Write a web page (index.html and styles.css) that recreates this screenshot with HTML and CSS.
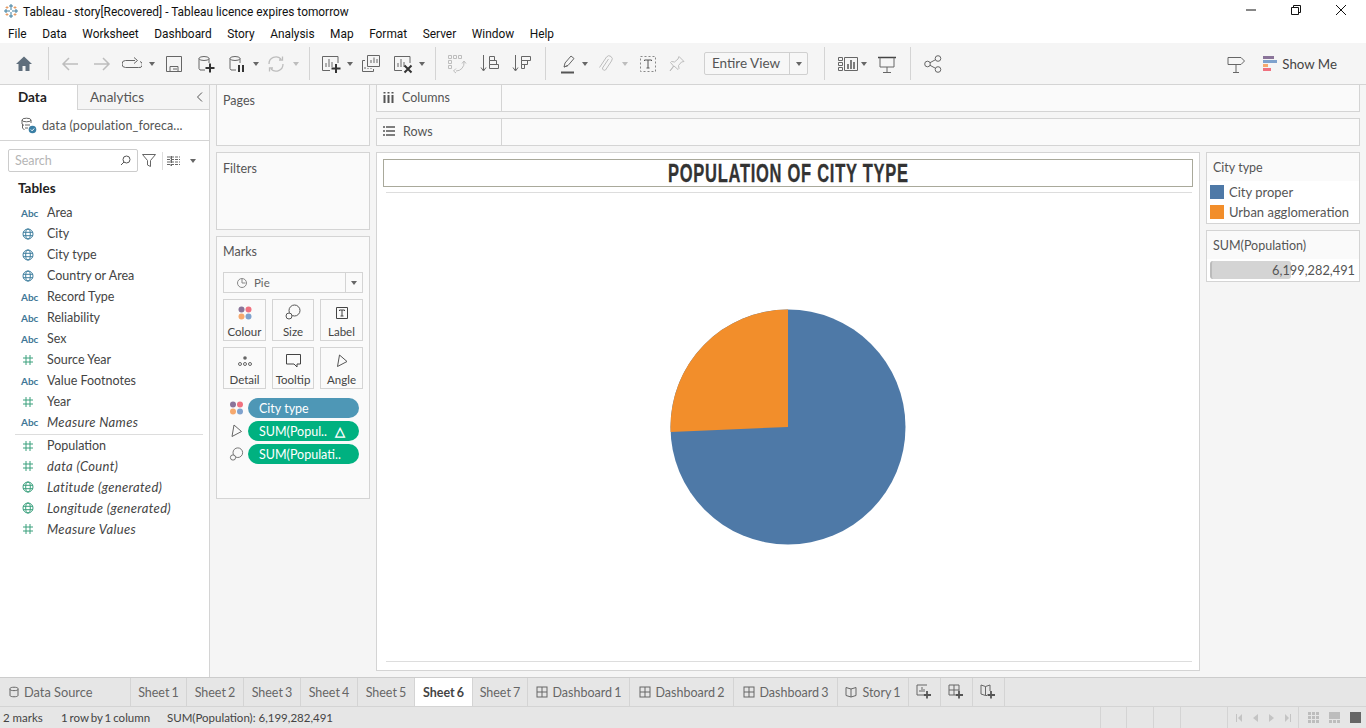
FILE: index.html
```html
<!DOCTYPE html>
<html lang="en">
<head>
    <meta charset="UTF-8">
    <meta name="viewport" content="width=device-width, initial-scale=1.0">
    <title>Tableau - story[Recovered]</title>
    <link rel="stylesheet" href="styles.css">
</head>
<body>
    <svg class="defs" width="0" height="0">
        <symbol id="globe" viewBox="0 0 12 12"><g fill="none" stroke="currentColor"><circle cx="6" cy="6" r="5"/><ellipse cx="6" cy="6" rx="2.3" ry="5"/><path d="M1 4.300h10M1 7.700h10"/></g></symbol>
        <symbol id="hash" viewBox="0 0 12 12"><path d="M4 1v10M8 1v10M1 4h10M1 8h10" stroke="currentColor" fill="none"/></symbol>
        <symbol id="drop" viewBox="0 0 6 4"><path d="M0 0h6L3 4z" fill="currentColor"/></symbol>
        <symbol id="dots" viewBox="0 0 14 14"><circle cx="3.500" cy="3.500" r="3" fill="#8a7499"/><circle cx="10.500" cy="3.500" r="3" fill="#f0717f"/><circle cx="3.500" cy="10.500" r="3" fill="#f6a96e"/><circle cx="10.500" cy="10.500" r="3" fill="#7fa2cd"/></symbol>
        <symbol id="size" viewBox="0 0 16 16"><g fill="none" stroke="currentColor"><circle cx="9.500" cy="6.500" r="5.500"/><circle cx="4" cy="12" r="3" fill="#fafafa"/></g></symbol>
        <symbol id="angle" viewBox="0 0 12 14"><path d="M3.500 1L11 7.500 1.500 12.500z" fill="none" stroke="currentColor"/></symbol>
        <symbol id="dash" viewBox="0 0 12 12"><g fill="none" stroke="currentColor"><rect x="1" y="1" width="10" height="10"/><path d="M6 1v10M1 6h10"/></g></symbol>
        <symbol id="book" viewBox="0 0 12 12"><path d="M1 1.500L6 3l5-1.500v8L6 11 1 9.500zM6 3v8" fill="none" stroke="currentColor"/></symbol>
    </svg>

    <div class="app">
        <div class="titlebar">
            <svg class="logo" width="14" height="14" viewBox="0 0 14 14">
                <path d="M7 0v6M5 2h4M7 8v6M5 12h4M0 7h6M2 5v4M8 7h6M12 5v4" stroke="#3f7f9f" fill="none"/>
                <path d="M3 2v3M1.500 3.500h3M11 2v3M9.500 3.500h3M3 9v3M1.500 10.500h3M11 9v3M9.500 10.500h3" stroke="#e0833f" fill="none" opacity=".7"/>
            </svg>
            <span class="titlebar-text">Tableau - story[Recovered] - Tableau licence expires tomorrow</span>
            <div class="win-controls">
                <svg width="10" height="10" viewBox="0 0 10 10"><path d="M0 5h10" stroke="#111" fill="none"/></svg>
                <svg width="10" height="10" viewBox="0 0 10 10"><path d="M.500 2.500h7v7h-7zM2.500 2.500v-2h7v7h-2" stroke="#111" fill="none"/></svg>
                <svg width="10" height="10" viewBox="0 0 10 10"><path d="M0 0l10 10M10 0L0 10" stroke="#111" fill="none"/></svg>
            </div>
        </div>

        <div class="menubar">
            <span>File</span><span>Data</span><span>Worksheet</span><span>Dashboard</span><span>Story</span><span>Analysis</span><span>Map</span><span>Format</span><span>Server</span><span>Window</span><span>Help</span>
        </div>

        <div class="toolbar">
            <svg class="tb ml-14" width="20" height="20" viewBox="0 0 20 20"><path d="M10 2.500L2 10h2.500v7h4v-5h3v5h4v-7H18z" fill="#5f6e7c"/></svg>
            <i class="tb-sep ml-14"></i>
            <svg class="tb ml-11 off" width="20" height="20" viewBox="0 0 20 20"><path d="M18 10H3M9 4l-6 6 6 6" fill="none" stroke="currentColor" stroke-width="1.500"/></svg>
            <svg class="tb ml-12 off" width="20" height="20" viewBox="0 0 20 20"><path d="M2 10h15M11 4l6 6-6 6" fill="none" stroke="currentColor" stroke-width="1.500"/></svg>
            <svg class="tb ml-10" width="20" height="20" viewBox="0 0 20 20"><path d="M13 6.500H3.500a3 3 0 0 0 0 7h13a3 3 0 0 0 1.500-6M12 3.500l3.500 3-3.500 3" fill="none" stroke="currentColor"/></svg>
            <svg class="tb-drop ml-7"><use href="#drop"/></svg>
            <svg class="tb ml-10" width="18" height="18" viewBox="0 0 18 18"><path d="M1.500 1.500h15v15h-15zM5 16.500v-5h8v5M8 14h4" fill="none" stroke="currentColor"/></svg>
            <svg class="tb ml-14" width="18" height="18" viewBox="0 0 18 18"><g fill="none" stroke="currentColor"><ellipse cx="7" cy="3.500" rx="5" ry="2"/><path d="M2 3.500v10l1 1.500h5M12 3.500V8"/></g><path d="M13 8.500v9M8.500 13h9" stroke="#333" stroke-width="2" fill="none"/></svg>
            <svg class="tb ml-13" width="18" height="18" viewBox="0 0 18 18"><g fill="none" stroke="currentColor"><ellipse cx="7" cy="3.500" rx="5" ry="2"/><path d="M2 3.500v10l1 1.500h5M12 3.500V8"/></g><path d="M11 10v7M15 10v7" stroke="#333" stroke-width="2" fill="none"/></svg>
            <svg class="tb-drop ml-7"><use href="#drop"/></svg>
            <svg class="tb ml-7 off" width="20" height="20" viewBox="0 0 20 20"><path d="M3 10a7 7 0 0 1 12-5M17 10a7 7 0 0 1-12 5M13 6h3.500V2.500M7 14H3.500v3.500" fill="none" stroke="currentColor" stroke-width="1.300"/></svg>
            <svg class="tb-drop ml-7 off"><use href="#drop"/></svg>
            <i class="tb-sep ml-10"></i>
            <svg class="tb ml-11" width="20" height="20" viewBox="0 0 20 20"><path d="M17 9V2.500H1.500v14H9M5 13V9M8 13V5M11 13V8" fill="none" stroke="currentColor"/><path d="M15 10v9M10.500 14.500h9" stroke="#333" stroke-width="2" fill="none"/></svg>
            <svg class="tb-drop ml-6"><use href="#drop"/></svg>
            <svg class="tb ml-8" width="20" height="20" viewBox="0 0 20 20"><path d="M6.500 1.500h12v11h-12zM10 9V6M13 9V3.500M16 9V5M4 6.500H1.500v11h11v-2.500M4 15v-2M7 15v-1M10 15v-1" fill="none" stroke="currentColor"/></svg>
            <svg class="tb ml-12" width="20" height="20" viewBox="0 0 20 20"><path d="M17 9V2.500H1.500v14H9M5 13V9M8 13V5M11 13V8" fill="none" stroke="currentColor"/><path d="M11.500 11.500l7 7M18.500 11.500l-7 7" stroke="#333" stroke-width="2" fill="none"/></svg>
            <svg class="tb-drop ml-6"><use href="#drop"/></svg>
            <i class="tb-sep ml-10"></i>
            <svg class="tb ml-11 off" width="20" height="20" viewBox="0 0 20 20"><path d="M1.500 1.500h3v3h-3zM6.500 1.500h3v3h-3zM11.500 1.500h3v3h-3zM1.500 6.500h3v3h-3zM1.500 11.500h3v3h-3zM17 8a8 8 0 0 1-8 9M9 14.500l-2.500 2.500L9 19M15 9.500L17 7l2 2.500" fill="none" stroke="currentColor"/></svg>
            <svg class="tb ml-13" width="20" height="20" viewBox="0 0 20 20"><path d="M3.500 1v15M1 13.500l2.500 3.500L6 13.500M9.500 2.500h5v4h-5zM9.500 6.500h7v4h-7zM9.500 10.500h9v4h-9z" fill="none" stroke="currentColor"/></svg>
            <svg class="tb ml-12" width="20" height="20" viewBox="0 0 20 20"><path d="M3.500 1v15M1 13.500l2.500 3.500L6 13.500M9.500 2.500h9v4h-9zM9.500 6.500h6v4h-6zM9.500 10.500h3v4h-3z" fill="none" stroke="currentColor"/></svg>
            <i class="tb-sep ml-13"></i>
            <svg class="tb ml-14" width="16" height="20" viewBox="0 0 16 20"><path d="M4 13l1-4 6-7 3 2.500-6 7zM4 13l4-1.500" fill="none" stroke="currentColor"/><path d="M1 18.500h13" stroke="#555" stroke-width="2" fill="none"/></svg>
            <svg class="tb-drop ml-6"><use href="#drop"/></svg>
            <svg class="tb ml-9 off" width="16" height="20" viewBox="0 0 16 20"><path d="M11.500 5l-6 9a2 2 0 0 0 3 2l6-9a3.200 3.200 0 0 0-5-4l-7 10.500" fill="none" stroke="currentColor"/></svg>
            <svg class="tb-drop ml-9 off"><use href="#drop"/></svg>
            <svg class="tb ml-11" width="18" height="18" viewBox="0 0 18 18"><path d="M1.500 1.500h15v15h-15z" fill="none" stroke="#888" stroke-dasharray="2 2"/><path d="M5.500 6V5h7v1M9 5v8M7.500 13h3" fill="none" stroke="#555"/></svg>
            <svg class="tb ml-11 off" width="18" height="18" viewBox="0 0 18 18"><path d="M11 1.500l5 5-2.500.5-3 3.500.5 3-1 1L6 11l-4 5 3.500-5-3-3.500 1-1 3 .5 3.500-3z" fill="none" stroke="currentColor"/></svg>
            <div class="fit-combo ml-18">
                <span class="fit-label">Entire View</span>
                <span class="fit-arrow"><svg class="tb-drop"><use href="#drop"/></svg></span>
            </div>
            <i class="tb-sep ml-16"></i>
            <svg class="tb ml-12" width="22" height="20" viewBox="0 0 22 20"><path d="M1.500 3.500h4v3h-4zM1.500 8.500h4v3h-4zM1.500 13.500h4v3h-4zM7.500 3.500h13v13h-13z" fill="none" stroke="currentColor"/><path d="M11 15v-5M14 15V6M17 15v-7" stroke="#555" stroke-width="1.500" fill="none"/></svg>
            <svg class="tb-drop ml-2"><use href="#drop"/></svg>
            <svg class="tb ml-11" width="18" height="20" viewBox="0 0 18 20"><path d="M0 3.500h18" stroke="#444" stroke-width="1.500" fill="none"/><path d="M2 3.500v9.500h14V3.500M9 13v5M5 18.500h8" fill="none" stroke="currentColor"/></svg>
            <i class="tb-sep ml-14"></i>
            <svg class="tb ml-13" width="18" height="18" viewBox="0 0 18 18"><g fill="none" stroke="currentColor"><circle cx="3.500" cy="9" r="2.800"/><circle cx="14" cy="3.500" r="2.800"/><circle cx="14" cy="14.500" r="2.800"/><path d="M6 7.700l5.500-3M6 10.300l5.500 3"/></g></svg>
            <div class="toolbar-right">
                <svg class="tb" width="18" height="20" viewBox="0 0 18 20"><path d="M1 3.500h13l3.500 3.500-3.500 3.500H1zM9 10.500v8M6 18.500h6" fill="none" stroke="currentColor"/></svg>
                <div class="show-me">
                    <svg width="15" height="16" viewBox="0 0 15 16"><path d="M0 0h11v3H0z" fill="#8a7499"/><path d="M0 4h14v3H0z" fill="#7fa2cd"/><path d="M0 8h5v3H0z" fill="#f6a96e"/><path d="M0 12h8v3H0z" fill="#f0717f"/></svg>
                    <span>Show Me</span>
                </div>
            </div>
        </div>

        <div class="main">
            <div class="data-pane">
                <div class="pane-tabs">
                    <div class="pane-tab active">Data</div>
                    <div class="pane-tab analytics">Analytics
                        <svg class="collapse" width="7" height="10" viewBox="0 0 7 10"><path d="M6 .500L1.500 5 6 9.500" fill="none" stroke="#555"/></svg>
                    </div>
                </div>
                <div class="source-row">
                    <svg width="17" height="17" viewBox="0 0 17 17"><g fill="none" stroke="#666"><ellipse cx="6.500" cy="3" rx="4.500" ry="1.800"/><path d="M2 3v4l2 1.500M11 3v3M2.500 7v4l2 2M5 8h5M5 11h3"/></g><circle cx="12.500" cy="12.500" r="3.800" fill="#3a7fa5"/><path d="M10.800 12.500l1.300 1.300 2.100-2.300" stroke="#fff" fill="none"/></svg>
                    <span>data (population_foreca...</span>
                </div>
                <div class="search-row">
                    <div class="search-box">
                        <span>Search</span>
                        <svg width="11" height="11" viewBox="0 0 11 11"><circle cx="6.500" cy="4.500" r="3.500" fill="none" stroke="#555"/><path d="M4 7l-3 3" stroke="#555" fill="none"/></svg>
                    </div>
                    <svg class="filter-icon" width="14" height="13" viewBox="0 0 14 13"><path d="M.500.500h13L8.500 6.500v6l-3-1.500V6.500z" fill="none" stroke="#666"/></svg>
                    <i class="search-sep"></i>
                    <svg class="list-icon" width="13" height="10" viewBox="0 0 13 10"><path d="M0 1h13M0 3.500h13M0 6h13M0 8.500h13M4 0v10M4.500 0v10" stroke="#666" stroke-dasharray="3 1" fill="none"/></svg>
                    <svg class="tb-drop list-drop"><use href="#drop"/></svg>
                </div>
                <div class="tables-title">Tables</div>
                <ul class="field-list">
                    <li><span class="abc">Abc</span>Area</li>
                    <li><svg class="f-icon dim"><use href="#globe"/></svg>City</li>
                    <li><svg class="f-icon dim"><use href="#globe"/></svg>City type</li>
                    <li><svg class="f-icon dim"><use href="#globe"/></svg>Country or Area</li>
                    <li><span class="abc">Abc</span>Record Type</li>
                    <li><span class="abc">Abc</span>Reliability</li>
                    <li><span class="abc">Abc</span>Sex</li>
                    <li><svg class="f-icon mea"><use href="#hash"/></svg>Source Year</li>
                    <li><span class="abc">Abc</span>Value Footnotes</li>
                    <li><svg class="f-icon mea"><use href="#hash"/></svg>Year</li>
                    <li class="gen"><span class="abc">Abc</span>Measure Names</li>
                    <li class="field-divider"></li>
                    <li><svg class="f-icon mea"><use href="#hash"/></svg>Population</li>
                    <li class="gen"><svg class="f-icon mea"><use href="#hash"/></svg>data (Count)</li>
                    <li class="gen"><svg class="f-icon mea"><use href="#globe"/></svg>Latitude (generated)</li>
                    <li class="gen"><svg class="f-icon mea"><use href="#globe"/></svg>Longitude (generated)</li>
                    <li class="gen"><svg class="f-icon mea"><use href="#hash"/></svg>Measure Values</li>
                </ul>
            </div>

            <div class="cards-col">
                <div class="card pages"><div class="card-title">Pages</div></div>
                <div class="card filters"><div class="card-title">Filters</div></div>
                <div class="card marks">
                    <div class="card-title">Marks</div>
                    <div class="mark-type">
                        <svg width="10" height="10" viewBox="0 0 10 10"><circle cx="5" cy="5" r="4.500" fill="none" stroke="#888"/><path d="M5 1v4h3.500" fill="none" stroke="#888"/></svg>
                        <span>Pie</span>
                        <b class="mark-arrow"><svg class="tb-drop"><use href="#drop"/></svg></b>
                    </div>
                    <div class="mark-grid">
                        <div class="mark-btn"><svg width="14" height="14"><use href="#dots"/></svg><span>Colour</span></div>
                        <div class="mark-btn"><svg width="16" height="16"><use href="#size"/></svg><span>Size</span></div>
                        <div class="mark-btn"><svg width="14" height="14" viewBox="0 0 14 14"><path d="M1.500 1.500h11v11h-11z" fill="none" stroke="#444"/><path d="M4.500 5V4h5v1M7 4v6M5.500 10h3" fill="none" stroke="#444"/></svg><span>Label</span></div>
                        <div class="mark-btn"><svg width="14" height="14" viewBox="0 0 14 14"><circle cx="7" cy="4" r="1.800" fill="#666"/><g fill="none" stroke="#666"><circle cx="2" cy="10" r="1.500"/><circle cx="7" cy="10" r="1.500"/><circle cx="12" cy="10" r="1.500"/></g></svg><span>Detail</span></div>
                        <div class="mark-btn"><svg width="15" height="14" viewBox="0 0 15 14"><path d="M.500.500h14v9.500H11v3L8 10H.500z" fill="none" stroke="#444"/></svg><span>Tooltip</span></div>
                        <div class="mark-btn"><svg width="12" height="14"><use href="#angle"/></svg><span>Angle</span></div>
                    </div>
                    <div class="pill-row"><svg width="14" height="14"><use href="#dots"/></svg><div class="pill blue">City type</div></div>
                    <div class="pill-row"><svg class="pill-icon" width="12" height="14"><use href="#angle"/></svg><div class="pill green">SUM(Popul..<span class="delta">&#9651;</span></div></div>
                    <div class="pill-row"><svg class="pill-icon" width="15" height="15"><use href="#size"/></svg><div class="pill green">SUM(Populati..</div></div>
                </div>
            </div>

            <div class="work-col">
                <div class="shelf">
                    <div class="shelf-label">
                        <svg width="11" height="11" viewBox="0 0 11 11"><path d="M1.500 3v8M5.500 3v8M9.500 3v8M1.500 0v1.500M5.500 0v1.500M9.500 0v1.500" stroke="#555" stroke-width="2" fill="none"/></svg>
                        Columns
                    </div>
                </div>
                <div class="shelf">
                    <div class="shelf-label">
                        <svg width="12" height="10" viewBox="0 0 12 10"><path d="M3 1h9M3 5h9M3 9h9M0 1h2M0 5h2M0 9h2" stroke="#555" stroke-width="1.500" fill="none"/></svg>
                        Rows
                    </div>
                </div>
                <div class="work-row">
                    <div class="sheet">
                        <div class="sheet-title"><span>POPULATION OF CITY TYPE</span></div>
                        <div class="view">
                            <svg class="pie" width="236" height="236" viewBox="0 0 236 236">
                                <circle cx="118" cy="118" r="117.500" fill="#4e79a7"/>
                                <path d="M118 118V.500A117.500 117.500 0 0 0 .600 123z" fill="#f28e2b"/>
                            </svg>
                        </div>
                    </div>
                    <div class="legends">
                        <div class="legend">
                            <div class="legend-title">City type</div>
                            <div class="legend-body">
                                <div class="legend-item"><i class="swatch s-blue"></i>City proper</div>
                                <div class="legend-item"><i class="swatch s-orange"></i>Urban agglomeration</div>
                            </div>
                        </div>
                        <div class="legend">
                            <div class="legend-title">SUM(Population)</div>
                            <div class="legend-body size-body">
                                <div class="size-bar"></div>
                                <span>6,199,282,491</span>
                            </div>
                        </div>
                    </div>
                </div>
            </div>
        </div>

        <div class="tabs">
            <div class="tab tab-source"><svg width="10" height="12" viewBox="0 0 10 12"><path d="M1 2.500C1 .8 9 .8 9 2.500v7c0 1.700-8 1.700-8 0zM1 3.500c0 1.500 8 1.500 8 0" fill="none" stroke="#666"/></svg>Data Source</div>
            <div class="tab w-s1">Sheet 1</div>
            <div class="tab w-s2">Sheet 2</div>
            <div class="tab w-s2">Sheet 3</div>
            <div class="tab w-s2">Sheet 4</div>
            <div class="tab w-s2">Sheet 5</div>
            <div class="tab w-s6 active">Sheet 6</div>
            <div class="tab w-s7">Sheet 7</div>
            <div class="tab w-d1"><svg class="tab-icon"><use href="#dash"/></svg>Dashboard 1</div>
            <div class="tab w-d2"><svg class="tab-icon"><use href="#dash"/></svg>Dashboard 2</div>
            <div class="tab w-d2"><svg class="tab-icon"><use href="#dash"/></svg>Dashboard 3</div>
            <div class="tab w-st"><svg class="tab-icon"><use href="#book"/></svg>Story 1</div>
            <div class="tab w-new">
                <svg width="17" height="16" viewBox="0 0 17 16"><path d="M11 1H1v10h6M4 8V6M6 8V3M8 8V5" stroke="#666" fill="none"/><path d="M11 7v7.500M7.500 11h7.500" stroke="#555" stroke-width="1.800" fill="none"/></svg>
            </div>
            <div class="tab w-new">
                <svg width="17" height="16" viewBox="0 0 17 16"><path d="M11 7V1H1v10h6M6 1v10M1 6h10" stroke="#666" fill="none"/><path d="M11 7v7.500M7.500 11h7.500" stroke="#555" stroke-width="1.800" fill="none"/></svg>
            </div>
            <div class="tab w-new">
                <svg width="17" height="16" viewBox="0 0 17 16"><path d="M1 1l4.500 1.500L10 1v6M1 1v9l4.500 1.500H7M5.500 2.500v9" stroke="#666" fill="none"/><path d="M11 7v7.500M7.500 11h7.500" stroke="#555" stroke-width="1.800" fill="none"/></svg>
            </div>
        </div>

        <div class="statusbar">
            <span class="st-marks">2 marks</span>
            <span class="st-rows">1 row by 1 column</span>
            <span>SUM(Population): 6,199,282,491</span>
            <div class="st-right">
                <i class="st-cell c1"></i><i class="st-cell c2"></i><i class="st-cell c2"></i><i class="st-cell c3"></i>
                <div class="st-cell st-nav">
                    <svg width="6" height="8" viewBox="0 0 6 8"><path d="M0 0h1v8H0zM6 0v8L2 4z" fill="#c4c4c4"/></svg>
                    <svg width="5" height="8" viewBox="0 0 5 8"><path d="M5 0v8L0 4z" fill="#c4c4c4"/></svg>
                    <svg width="5" height="8" viewBox="0 0 5 8"><path d="M0 0v8l5-4z" fill="#c4c4c4"/></svg>
                    <svg width="6" height="8" viewBox="0 0 6 8"><path d="M0 0v8l4-4zM5 0h1v8H5z" fill="#c4c4c4"/></svg>
                </div>
                <div class="st-views">
                    <svg width="11" height="11" viewBox="0 0 11 11"><path d="M0 0h3v3H0zM4 0h3v3H4zM8 0h3v3H8zM0 4h3v3H0zM4 4h3v3H4zM8 4h3v3H8zM0 8h3v3H0zM4 8h3v3H4zM8 8h3v3H8z" fill="#bdbdbd"/></svg>
                    <svg width="11" height="11" viewBox="0 0 11 11"><path d="M0 0h11v7H0zM0 8h3v3H0zM4 8h3v3H4zM8 8h3v3H8z" fill="#bdbdbd"/></svg>
                    <svg width="11" height="11" viewBox="0 0 11 11"><path d="M0 0h11v11H0z" fill="#666"/></svg>
                </div>
            </div>
        </div>
    </div>
</body>
</html>
```

FILE: styles.css
```css
* {
    box-sizing: border-box;
}
html, body {
    margin: 0;
    padding: 0;
    height: 100%;
    overflow: hidden;
}
body {
    font-family: Lato, "Open Sans", sans-serif;
    font-size: 12.500px;
    color: #444;
    background: #f5f5f5;
}
.defs {
    position: absolute;
}
svg {
    display: block;
    flex: none;
}
.app {
    display: flex;
    flex-direction: column;
    height: 728px;
}

/* window chrome */
.titlebar {
    flex: none;
    display: flex;
    align-items: center;
    height: 22px;
    padding-left: 4px;
    background: #fff;
    font-family: Roboto, sans-serif;
    font-size: 11.900px;
    color: #111;
}
.titlebar-text {
    margin-left: 5px;
    padding-top: 2px;
}
.win-controls {
    display: flex;
    gap: 35px;
    margin-left: auto;
    margin-right: 20px;
    margin-top: -2px;
}
.menubar {
    flex: none;
    display: flex;
    align-items: center;
    height: 21px;
    padding: 2px 0 0 8px;
    background: #fff;
    font-family: Roboto, sans-serif;
    font-size: 11.900px;
    color: #111;
}
.menubar span {
    margin-right: 15.500px;
}

/* toolbar */
.toolbar {
    flex: none;
    display: flex;
    align-items: center;
    height: 42px;
    background: #f5f5f5;
    border-bottom: 1px solid #d4d4d4;
}
.tb {
    color: #666;
}
.off {
    color: #bdbdbd;
}
.tb-sep {
    display: block;
    width: 1px;
    height: 33px;
    background: #d4d4d4;
}
.tb-drop {
    width: 6px;
    height: 4px;
    color: #666;
}
.tb-drop.off {
    color: #bdbdbd;
}
.ml-2 { margin-left: 2px; }
.ml-6 { margin-left: 6px; }
.ml-7 { margin-left: 7px; }
.ml-8 { margin-left: 8px; }
.ml-9 { margin-left: 9px; }
.ml-10 { margin-left: 10px; }
.ml-11 { margin-left: 11px; }
.ml-12 { margin-left: 12px; }
.ml-13 { margin-left: 13px; }
.ml-14 { margin-left: 14px; }
.ml-16 { margin-left: 16px; }
.ml-18 { margin-left: 18px; }
.fit-combo {
    display: flex;
    width: 104px;
    height: 23px;
    border: 1px solid #d0d0d0;
    border-radius: 2px;
    background: #f7f7f7;
}
.fit-label {
    flex: 1;
    line-height: 20px;
    padding-left: 7px;
    font-size: 13.500px;
    color: #555;
}
.fit-arrow {
    display: flex;
    align-items: center;
    justify-content: center;
    width: 18px;
    border-left: 1px solid #d0d0d0;
}
.toolbar-right {
    display: flex;
    align-items: center;
    margin-left: auto;
    margin-right: 29px;
}
.show-me {
    display: flex;
    align-items: center;
    margin-left: 18px;
    font-size: 13.300px;
    color: #444;
}
.show-me span {
    margin-left: 4px;
}

.main {
    flex: 1;
    display: flex;
    min-height: 0;
}

/* data pane */
.data-pane {
    flex: none;
    width: 210px;
    background: #fff;
    border-right: 1px solid #d4d4d4;
}
.pane-tabs {
    display: flex;
    height: 25px;
}
.pane-tab {
    line-height: 25px;
    font-size: 13.500px;
}
.pane-tab.active {
    width: 77px;
    padding-left: 18px;
    font-weight: 700;
    color: #222;
}
.pane-tab.analytics {
    flex: 1;
    display: flex;
    align-items: center;
    padding-left: 12px;
    background: #f5f5f5;
    border-left: 1px solid #d4d4d4;
    border-bottom: 1px solid #d4d4d4;
    color: #555;
}
.collapse {
    margin-left: auto;
    margin-right: 6px;
}
.source-row {
    display: flex;
    align-items: center;
    height: 31px;
    padding-left: 20px;
    border-bottom: 1px solid #d4d4d4;
    color: #555;
}
.source-row span {
    margin-left: 5px;
    letter-spacing: 0.1px;
}
.search-row {
    display: flex;
    align-items: center;
    height: 23px;
    margin-top: 8px;
    padding-left: 8px;
}
.search-box {
    display: flex;
    align-items: center;
    justify-content: space-between;
    width: 130px;
    height: 23px;
    padding: 0 6px;
    border: 1px solid #ccc;
    border-radius: 2px;
    color: #b5b5b5;
}
.filter-icon {
    margin-left: 4px;
}
.search-sep {
    display: block;
    width: 1px;
    height: 18px;
    margin-left: 6px;
    background: #ddd;
}
.list-icon {
    margin-left: 4px;
}
.list-drop {
    margin-left: 10px;
}
.tables-title {
    margin: 7px 0 0 18px;
    height: 18px;
    line-height: 18px;
    font-size: 13.500px;
    font-weight: 700;
    color: #222;
}
.field-list {
    list-style: none;
    margin: 5px 0 0;
    padding: 0;
}
.field-list li {
    display: flex;
    align-items: center;
    height: 21px;
    color: #444;
}
.field-list li.gen {
    padding-bottom: 2px;
    font-size: 13px;
    font-style: italic;
    letter-spacing: 0.35px;
}
.field-list li.field-divider {
    height: 1px;
    margin: 1px 6px 0 15px;
    background: #ddd;
}
.abc {
    width: 47px;
    padding-left: 21px;
    font-size: 10px;
    font-style: normal;
    font-weight: 700;
    letter-spacing: 0;
    color: #3f7797;
}
.f-icon {
    width: 12px;
    height: 12px;
    margin: 0 13px 0 22px;
}
.f-icon.dim {
    color: #3f7f9f;
}
.f-icon.mea {
    color: #3aa07d;
}

/* pages / filters / marks */
.cards-col {
    flex: none;
    width: 166px;
    padding: 0 6px;
    display: flex;
    flex-direction: column;
    gap: 6px;
}
.card {
    flex: none;
    background: #fafafa;
    border: 1px solid #d4d4d4;
}
.card-title {
    padding: 9px 6px 0;
    line-height: 14px;
    color: #555;
}
.pages {
    height: 61px;
    border-top: 0;
}
.filters {
    height: 78px;
}
.marks {
    height: 263px;
    padding: 0 6px;
}
.marks .card-title {
    padding: 8px 0 0;
}
.mark-type {
    display: flex;
    align-items: center;
    height: 21px;
    margin-top: 13px;
    padding-left: 13px;
    border: 1px solid #d4d4d4;
    font-size: 11.500px;
    color: #666;
}
.mark-type span {
    margin-left: 7px;
}
.mark-arrow {
    display: flex;
    align-items: center;
    justify-content: center;
    width: 17px;
    height: 100%;
    margin-left: auto;
    border-left: 1px solid #d4d4d4;
}
.mark-grid {
    display: grid;
    grid-template-columns: 43px 42px 43px;
    grid-auto-rows: 42px;
    column-gap: 6px;
    row-gap: 6px;
    margin-top: 6px;
}
.mark-btn {
    display: flex;
    flex-direction: column;
    align-items: center;
    justify-content: flex-end;
    border: 1px solid #d4d4d4;
    font-size: 11.500px;
    color: #444;
    padding-bottom: 1px;
}
.mark-btn span {
    margin-top: 5px;
    line-height: 14px;
}
.mark-btn svg {
    color: #555;
}
.pill-row {
    display: flex;
    align-items: center;
    height: 20px;
    margin-top: 3px;
}
.mark-grid + .pill-row {
    margin-top: 9px;
}
.pill-row svg {
    width: 15px;
    margin-left: 6px;
    color: #666;
}
.pill-row .pill-icon {
    height: 14px;
}
.pill {
    display: flex;
    align-items: center;
    width: 111px;
    height: 20px;
    margin-left: 4px;
    padding-left: 11px;
    border-radius: 10px;
    font-size: 12.500px;
    color: #fff;
}
.pill.blue {
    background: #4e97b6;
}
.pill.green {
    background: #00b180;
}
.delta {
    margin-left: 8px;
    font-size: 13px;
    font-weight: 700;
}

/* shelves and view */
.work-col {
    flex: 1;
    min-width: 0;
    padding-right: 6px;
    display: flex;
    flex-direction: column;
}
.shelf {
    flex: none;
    height: 28px;
    margin-bottom: 6px;
    background: #fafafa;
    border: 1px solid #d4d4d4;
}
.shelf:first-child {
    height: 27px;
    border-top: 0;
}
.shelf-label {
    display: flex;
    align-items: center;
    gap: 8px;
    width: 125px;
    height: 100%;
    padding: 0 0 2px 6px;
    border-right: 1px solid #d4d4d4;
    font-size: 12.500px;
    color: #555;
}
.work-row {
    flex: none;
    display: flex;
    gap: 6px;
}
.sheet {
    width: 824px;
    height: 519px;
    padding: 6px;
    background: #fff;
    border: 1px solid #d4d4d4;
}
.sheet-title {
    height: 28px;
    border: 1px solid #a9a99b;
    text-align: center;
    font-family: "Liberation Sans", sans-serif;
    font-size: 25px;
    line-height: 26px;
    font-weight: 700;
    color: #333;
}
.sheet-title span {
    display: inline-block;
    transform: scaleX(0.66);
    letter-spacing: 1.1px;
    -webkit-text-stroke: 0.3px #333;
}
.view {
    display: flex;
    align-items: center;
    justify-content: center;
    height: 470px;
    margin: 5px 1px 0 3px;
    padding-right: 2px;
    border-top: 1px solid #ddd;
    border-bottom: 1px solid #ddd;
}
.legends {
    flex: 1;
    display: flex;
    flex-direction: column;
    gap: 6px;
}
.legend {
    background: #fafafa;
    border: 1px solid #d4d4d4;
}
.legend-title {
    height: 28px;
    padding: 8px 6px 0;
    line-height: 14px;
    color: #555;
}
.legend-body {
    background: #fff;
    padding: 1px 0 1px 3px;
}
.legend-item {
    display: flex;
    align-items: center;
    gap: 5px;
    height: 20px;
    font-size: 13px;
    color: #555;
}
.swatch {
    display: block;
    width: 14px;
    height: 14px;
}
.s-blue {
    background: #4e79a7;
}
.s-orange {
    background: #f28e2b;
}
.size-body {
    display: flex;
    position: relative;
    justify-content: flex-end;
    align-items: center;
    height: 22px;
    padding: 0 4px 0 3px;
    color: #555;
}
.size-bar {
    position: absolute;
    left: 3px;
    top: 2px;
    bottom: 2px;
    width: 81px;
    background: #d4d4d4;
    border-left: 2px solid #bbb;
    border-radius: 3px;
}
.size-body span {
    position: relative;
    font-size: 12.800px;
}

/* tabs */
.tabs {
    flex: none;
    display: flex;
    height: 30px;
    background: #e6e6e6;
    border-top: 1px solid #ccc;
    border-bottom: 1px solid #d4d4d4;
}
.tab {
    display: flex;
    align-items: center;
    justify-content: center;
    gap: 5px;
    border-right: 1px solid #d4d4d4;
    font-size: 12.500px;
    word-spacing: -1px;
    color: #666;
}
.tab.active {
    background: #fff;
    font-weight: 700;
    color: #444;
}
.tab-icon {
    width: 12px;
    height: 12px;
    color: #666;
}
.tab-source {
    width: 131px;
    justify-content: flex-start;
    padding-left: 9px;
    font-size: 12.800px;
    word-spacing: 0;
}
.w-s1 { width: 56px; }
.w-s2 { width: 57px; }
.w-s6 { width: 58px; }
.w-s7 { width: 55px; }
.w-d1 { width: 102px; }
.w-d2 { width: 104px; }
.w-st { width: 71px; }
.w-new { width: 32px; }

/* status bar */
.statusbar {
    flex: none;
    display: flex;
    align-items: center;
    height: 21px;
    padding-left: 3px;
    background: #e6e6e6;
    font-size: 11.500px;
    color: #444;
}
.st-marks {
    width: 58px;
}
.st-rows {
    width: 106px;
    word-spacing: -1px;
}
.st-right {
    display: flex;
    align-self: stretch;
    margin-left: auto;
}
.st-cell {
    display: block;
    border-left: 1px solid #d4d4d4;
}
.c1 { width: 26px; }
.c2 { width: 27px; }
.c3 { width: 47px; }
.st-nav {
    display: flex;
    align-items: center;
    gap: 11px;
    width: 71px;
    padding-left: 8px;
}
.st-views {
    display: flex;
    align-items: center;
    gap: 10px;
    width: 68px;
    padding-left: 9px;
    border-left: 1px solid #d4d4d4;
}
```
